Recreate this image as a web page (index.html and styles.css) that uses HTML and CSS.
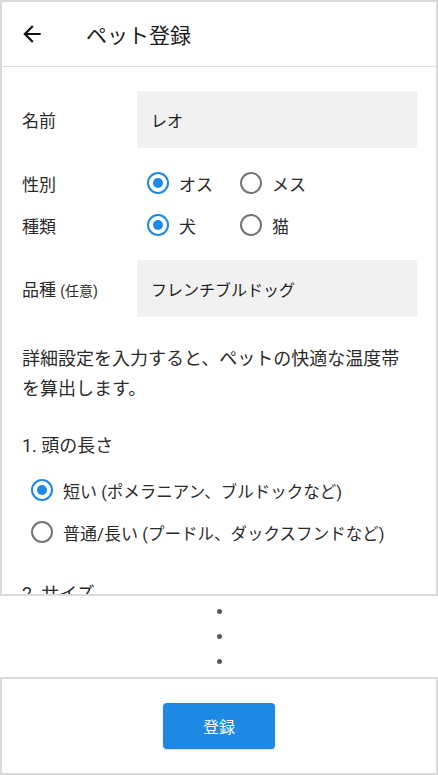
FILE: index.html
```html
<!DOCTYPE html>
<html lang="ja">

<head>
    <meta charset="UTF-8">
    <meta name="viewport" content="width=device-width, initial-scale=1.0">
    <title>ペット登録</title>
    <link rel="stylesheet" href="styles.css">
</head>

<body>
    <div class="screen">
        <div class="header">
            <svg class="back" viewBox="0 0 24 24" width="26" height="26">
                <path d="M20 11H7.83l5.59-5.59L12 4l-8 8 8 8 1.41-1.41L7.83 13H20v-2z" fill="#111"></path>
            </svg>
            <h1>ペット登録</h1>
        </div>

        <div class="content">
            <div class="row">
                <div class="label">名前</div>
                <div class="input">レオ</div>
            </div>

            <div class="choice gender">
                <div class="label">性別</div>
                <div class="option"><span class="radio checked"></span>オス</div>
                <div class="option"><span class="radio"></span>メス</div>
            </div>
            <div class="choice kind">
                <div class="label">種類</div>
                <div class="option"><span class="radio checked"></span>犬</div>
                <div class="option"><span class="radio"></span>猫</div>
            </div>

            <div class="row breed">
                <div class="label">品種 <small>(任意)</small></div>
                <div class="input">フレンチブルドッグ</div>
            </div>

            <p class="note">詳細設定を入力すると、ペットの快適な温度帯を算出します。</p>

            <h3 class="question">1. 頭の長さ</h3>
            <div class="answers">
                <div class="option"><span class="radio checked"></span><span>短い <small>(ポメラニアン、ブルドックなど)</small></span></div>
                <div class="option"><span class="radio"></span><span>普通/長い <small>(プードル、ダックスフンドなど)</small></span></div>
            </div>

            <h3 class="question next">2. サイズ</h3>
        </div>
    </div>

    <div class="dots">
        <span></span>
        <span></span>
        <span></span>
    </div>

    <div class="footer">
        <button class="submit">登録</button>
    </div>
</body>

</html>
```

FILE: styles.css
```css
body {
    margin: 0;
    width: 438px;
    font-family: Roboto, "Noto Sans CJK JP", sans-serif;
    color: #2b2b2b;
    background-color: #fff;
}

.screen {
    height: 592px;
    border: 2px solid #d9dbdb;
    overflow: hidden;
}

.header {
    height: 64px;
    display: flex;
    align-items: center;
    border-bottom: 1px solid #dcdcdc;
}

.back {
    margin-left: 17px;
}

.header h1 {
    margin: 0 0 0 41px;
    font-size: 21px;
    font-weight: normal;
    color: #1c1c1c;
}

.content {
    padding: 24px 19px 0 20px;
}

.row {
    display: flex;
    align-items: center;
}

.label {
    width: 115px;
    font-size: 17px;
    flex-shrink: 0;
}

.label small {
    font-size: 14px;
}

.input {
    flex: 1;
    height: 57px;
    display: flex;
    align-items: center;
    padding-left: 14px;
    background-color: #f1f1f1;
    border-radius: 2px;
    font-size: 16px;
    color: #1e1e1e;
}

.choice {
    display: flex;
    align-items: center;
    height: 30px;
}

.choice .label {
    width: 125px;
}

.choice .option {
    width: 93px;
}

.gender {
    margin-top: 20px;
}

.kind {
    margin-top: 12px;
}

.breed {
    margin-top: 20px;
}

.option {
    display: flex;
    align-items: center;
    gap: 10px;
    font-size: 17px;
}

.option small {
    font-size: 16.5px;
}

.radio {
    width: 18px;
    height: 18px;
    border: 2px solid #757575;
    border-radius: 50%;
    flex-shrink: 0;
    display: flex;
    align-items: center;
    justify-content: center;
}

.radio.checked {
    border-color: #1e88e5;
}

.radio.checked::after {
    content: "";
    width: 10px;
    height: 10px;
    border-radius: 50%;
    background-color: #1e88e5;
}

.note {
    margin: 27px 0 0;
    font-size: 18px;
    line-height: 30px;
    padding-right: 4px;
}

.question {
    margin: 27px 0 0;
    font-size: 18px;
    font-weight: normal;
    line-height: 30px;
}

.answers {
    margin-top: 14px;
    padding-left: 9px;
    display: flex;
    flex-direction: column;
    gap: 12px;
}

.answers .option {
    height: 30px;
}

.question.next {
    margin-top: 32px;
}

.dots {
    height: 81px;
    display: flex;
    flex-direction: column;
    align-items: center;
    justify-content: center;
    gap: 20px;
}

.dots span {
    width: 5px;
    height: 5px;
    border-radius: 50%;
    background-color: #5a5a5a;
}

.footer {
    height: 94px;
    border: 2px solid #d9dbdb;
    display: flex;
    align-items: center;
    justify-content: center;
}

.submit {
    width: 112px;
    height: 46px;
    border-style: none;
    border-radius: 4px;
    background-color: #1e88e5;
    color: #fff;
    font-family: Roboto, "Noto Sans CJK JP", sans-serif;
    font-size: 16px;
    box-shadow: 0 1px 2px rgba(0, 0, 0, 0.15);
}
```
